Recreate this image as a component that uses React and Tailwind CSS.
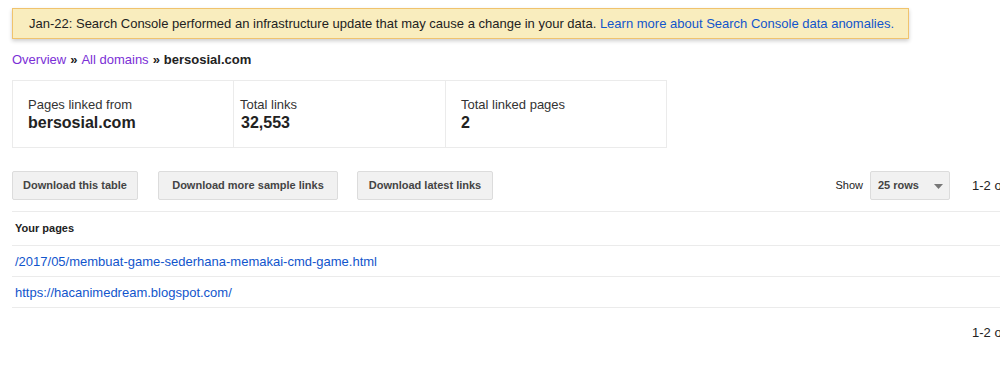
export default function App() {
  const font = { fontFamily: '"Liberation Sans", Arial, sans-serif' };
  return (
    <div className="w-[1000px] h-[385px] overflow-hidden bg-white text-[13px] text-[#222]" style={font}>
      <div className="pl-3 pt-2">
        <div className="w-[897px] h-[31px] bg-[#f9edbe] border border-[#f0c36d] shadow-[0_2px_4px_rgba(0,0,0,0.2)] flex items-center pl-4 text-[13px] text-[#222]">
          <span>Jan-22: Search Console performed an infrastructure update that may cause a change in your data.&nbsp;</span>
          <a className="text-[#1155cc]">Learn more about Search Console data anomalies.</a>
        </div>
        <div className="mt-[13px] h-[16px] flex items-center text-[13px]">
          <a className="text-[#7b2fd6]">Overview</a>
          <span className="font-bold text-[#222] mx-[4px]">»</span>
          <a className="text-[#7b2fd6]">All domains</a>
          <span className="font-bold text-[#222] mx-[4px]">»</span>
          <span className="font-bold text-[#222]">bersosial.com</span>
        </div>
        <div className="mt-[12px] w-[655px] h-[68px] border border-[#ebebeb] flex">
          <div className="w-[221px] border-r border-[#ebebeb] pl-[15px] pt-[16px]">
            <div className="text-[13px] text-[#333] leading-[16px]">Pages linked from</div>
            <div className="text-[16px] font-bold text-[#222] leading-[20px]">bersosial.com</div>
          </div>
          <div className="w-[212px] border-r border-[#ebebeb] pl-[6px] pt-[16px]">
            <div className="text-[13px] text-[#333] leading-[16px]">Total links</div>
            <div className="text-[16px] font-bold text-[#222] leading-[20px] pl-[1px]">32,553</div>
          </div>
          <div className="flex-1 pl-[15px] pt-[16px]">
            <div className="text-[13px] text-[#333] leading-[16px]">Total linked pages</div>
            <div className="text-[16px] font-bold text-[#222] leading-[20px]">2</div>
          </div>
        </div>
        <div className="mt-[23px] flex items-center h-[29px]">
          <button className="h-[29px] px-[8px] w-[126px] bg-[#f1f1f1] border border-[#dcdcdc] rounded-[2px] text-[11px] font-bold text-[#444]">Download this table</button>
          <button className="ml-[20px] h-[29px] w-[180px] bg-[#f1f1f1] border border-[#dcdcdc] rounded-[2px] text-[11px] font-bold text-[#444]">Download more sample links</button>
          <button className="ml-[19px] h-[29px] w-[136px] bg-[#f1f1f1] border border-[#dcdcdc] rounded-[2px] text-[11px] font-bold text-[#444]">Download latest links</button>
          <div className="flex-1" />
          <span className="text-[11px] text-[#222]">Show</span>
          <div className="ml-[7px] h-[29px] w-[80px] bg-[#f1f1f1] border border-[#dcdcdc] rounded-[2px] flex items-center pl-[7px] relative">
            <span className="text-[11px] font-bold text-[#444]">25 rows</span>
            <svg className="absolute right-[6px] top-[12px]" width="9" height="5" viewBox="0 0 9 5"><path d="M0 0h9L4.5 5z" fill="#777" /></svg>
          </div>
          <span className="ml-[22px] text-[13px] text-[#222] whitespace-nowrap w-[28px] overflow-hidden">1-2 of 2</span>
        </div>
        <div className="mt-[11px] border-t border-[#ebebeb]">
          <div className="h-[34px] flex items-center pl-[3px] text-[11px] font-bold text-[#222] border-b border-[#ebebeb]">Your pages</div>
          <div className="h-[31px] flex items-center pl-[3px] pt-[1px] border-b border-[#ebebeb]">
            <a className="text-[#1155cc] text-[13px]">/2017/05/membuat-game-sederhana-memakai-cmd-game.html</a>
          </div>
          <div className="h-[31px] flex items-center pl-[3px] pt-[1px] border-b border-[#ebebeb]">
            <a className="text-[#1155cc] text-[13px]">https://hacanimedream.blogspot.com/</a>
          </div>
        </div>
        <div className="flex justify-end mt-[15px]">
          <span className="text-[13px] text-[#222] whitespace-nowrap w-[28px] overflow-hidden">1-2 of 2</span>
        </div>
      </div>
    </div>
  );
}
